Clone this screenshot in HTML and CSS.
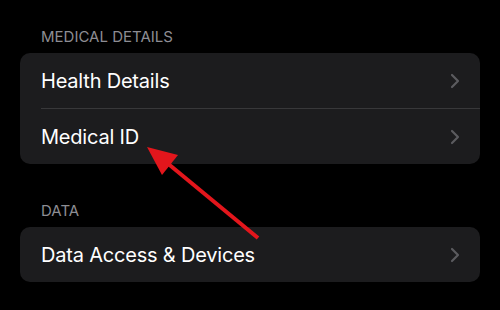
FILE: index.html
```html
<!DOCTYPE html>
<html lang="en">
<head>
    <meta charset="UTF-8">
    <title>Health Settings</title>
    <link rel="stylesheet" href="styles.css">
</head>
<body>
    <div class="screen">
        <div class="section">
            <div class="section-title">MEDICAL DETAILS</div>
            <div class="group">
                <div class="row">
                    <span class="label">Health Details</span>
                    <svg class="chevron" viewBox="0 0 10 16"><path d="M2 2 L8 8 L2 14" /></svg>
                </div>
                <div class="row">
                    <span class="label">Medical ID</span>
                    <svg class="chevron" viewBox="0 0 10 16"><path d="M2 2 L8 8 L2 14" /></svg>
                </div>
            </div>
        </div>

        <div class="section">
            <div class="section-title">DATA</div>
            <div class="group">
                <div class="row">
                    <span class="label">Data Access &amp; Devices</span>
                    <svg class="chevron" viewBox="0 0 10 16"><path d="M2 2 L8 8 L2 14" /></svg>
                </div>
            </div>
        </div>

        <svg class="arrow" viewBox="0 0 500 310">
            <line x1="258" y1="238" x2="166" y2="162" />
            <polygon points="147,147 178,155 162,175" />
        </svg>
    </div>
</body>
</html>
```

FILE: styles.css
```css
* {
    margin: 0;
    padding: 0;
    box-sizing: border-box;
}

body {
    background: #000;
    font-family: Inter, "Noto Sans", sans-serif;
    color: #fff;
}

.screen {
    position: relative;
    width: 500px;
    height: 310px;
    padding: 28px 20px 0;
    overflow: hidden;
}

.section {
    margin-bottom: 38px;
}

.section-title {
    font-size: 15px;
    color: #8d8d93;
    padding-left: 21px;
    height: 25px;
    line-height: 18px;
}

.group {
    background: #1c1c1e;
    border-radius: 10px;
    overflow: hidden;
}

.row {
    display: flex;
    align-items: center;
    justify-content: space-between;
    height: 55px;
    margin-left: 21px;
    padding-right: 20px;
}

.row + .row {
    height: 56px;
    border-top: 1px solid #38383a;
}

.label {
    font-size: 20px;
    letter-spacing: -0.2px;
}

.chevron {
    width: 10px;
    height: 16px;
    fill: none;
    stroke: #5b5b5f;
    stroke-width: 2.2;
    stroke-linecap: round;
    stroke-linejoin: round;
}

.arrow {
    position: absolute;
    left: 0;
    top: 0;
    width: 500px;
    height: 310px;
}

.arrow line {
    stroke: #e3161c;
    stroke-width: 4;
}

.arrow polygon {
    fill: #e3161c;
}
```
